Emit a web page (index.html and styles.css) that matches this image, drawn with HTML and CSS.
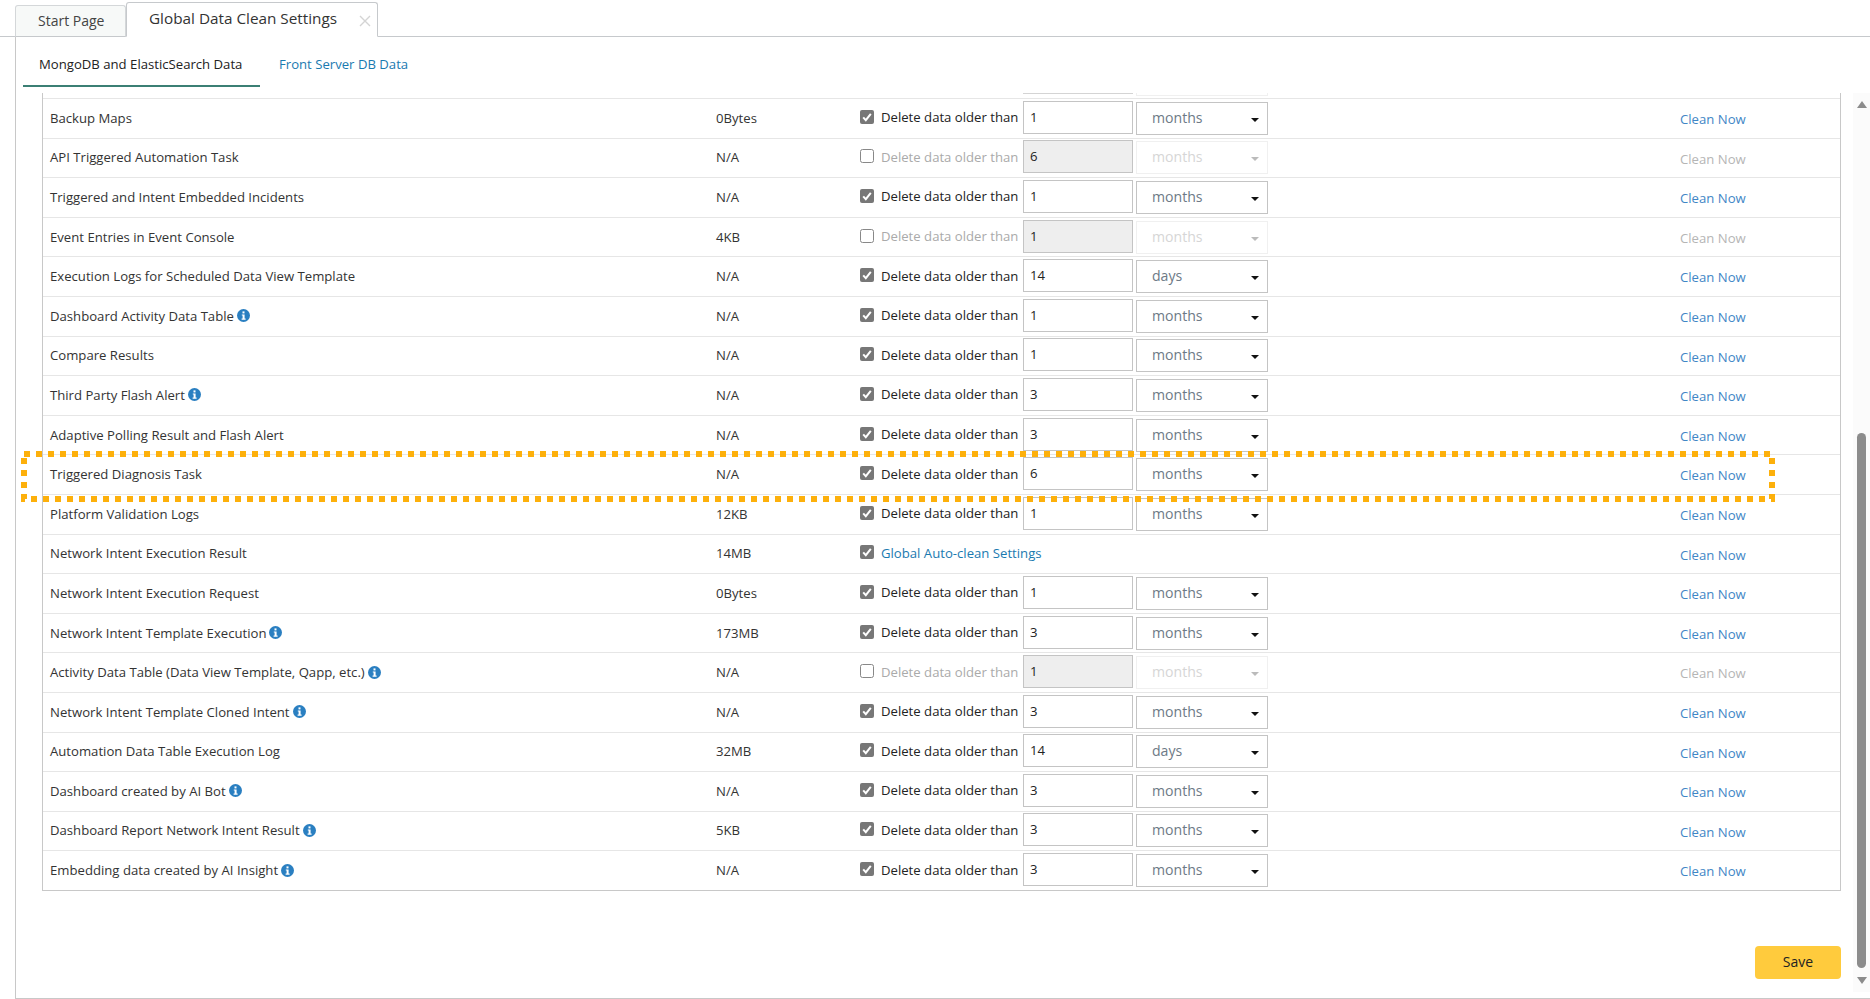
FILE: index.html
```html
<!DOCTYPE html>
<html lang="en">
<head>
<meta charset="utf-8">
<title>Global Data Clean Settings</title>
<link rel="stylesheet" href="styles.css">
</head>
<body>
<svg class="defs" width="0" height="0" aria-hidden="true">
  <symbol id="chk" viewBox="0 0 14 14"><rect width="14" height="14" rx="2" fill="#777"/><path d="M3.2 7.4 5.8 10.2 10.8 3.8" fill="none" stroke="#fff" stroke-width="2"/></symbol>
  <symbol id="unc" viewBox="0 0 14 14"><rect x=".5" y=".5" width="13" height="13" rx="2" fill="#fff" stroke="#888"/></symbol>
  <symbol id="inf" viewBox="0 0 13 13"><circle cx="6.5" cy="6.5" r="6.5" fill="#2a7fc1"/><rect x="5.5" y="2.4" width="2" height="2" fill="#fff"/><path d="M4.8 5.4h2.8v4.2h1v1.1H4.6V9.6h1V6.5h-.8z" fill="#fff"/></symbol>
</svg>
<div class="tabs">
  <div class="tab">Start Page</div>
  <div class="tab active">Global Data Clean Settings<svg class="close" width="12" height="12" viewBox="0 0 12 12"><path d="M1 1 11 11M11 1 1 11" stroke="#d4d4d4" stroke-width="1.4"/></svg></div>
</div>
<div class="content">
  <div class="main">
    <div class="subtabs">
      <div class="subtab on">MongoDB and ElasticSearch Data</div>
      <div class="subtab">Front Server DB Data</div>
    </div>
    <div class="table">
      <div class="peek"><span class="peek-in"></span><span class="peek-sel"></span></div>

      <div class="row"><div class="name">Backup Maps</div><div class="size">0Bytes</div><div class="ctl"><svg class="cb"><use href="#chk"/></svg><span class="lbl">Delete data older than</span><span class="num">1</span><span class="sel">months<i class="caret"></i></span></div><a class="clean">Clean Now</a></div>
      <div class="row off"><div class="name">API Triggered Automation Task</div><div class="size">N/A</div><div class="ctl"><svg class="cb"><use href="#unc"/></svg><span class="lbl">Delete data older than</span><span class="num">6</span><span class="sel">months<i class="caret"></i></span></div><a class="clean">Clean Now</a></div>
      <div class="row"><div class="name">Triggered and Intent Embedded Incidents</div><div class="size">N/A</div><div class="ctl"><svg class="cb"><use href="#chk"/></svg><span class="lbl">Delete data older than</span><span class="num">1</span><span class="sel">months<i class="caret"></i></span></div><a class="clean">Clean Now</a></div>
      <div class="row off"><div class="name">Event Entries in Event Console</div><div class="size">4KB</div><div class="ctl"><svg class="cb"><use href="#unc"/></svg><span class="lbl">Delete data older than</span><span class="num">1</span><span class="sel">months<i class="caret"></i></span></div><a class="clean">Clean Now</a></div>
      <div class="row"><div class="name">Execution Logs for Scheduled Data View Template</div><div class="size">N/A</div><div class="ctl"><svg class="cb"><use href="#chk"/></svg><span class="lbl">Delete data older than</span><span class="num">14</span><span class="sel">days<i class="caret"></i></span></div><a class="clean">Clean Now</a></div>
      <div class="row"><div class="name">Dashboard Activity Data Table<svg class="info"><use href="#inf"/></svg></div><div class="size">N/A</div><div class="ctl"><svg class="cb"><use href="#chk"/></svg><span class="lbl">Delete data older than</span><span class="num">1</span><span class="sel">months<i class="caret"></i></span></div><a class="clean">Clean Now</a></div>
      <div class="row"><div class="name">Compare Results</div><div class="size">N/A</div><div class="ctl"><svg class="cb"><use href="#chk"/></svg><span class="lbl">Delete data older than</span><span class="num">1</span><span class="sel">months<i class="caret"></i></span></div><a class="clean">Clean Now</a></div>
      <div class="row"><div class="name">Third Party Flash Alert<svg class="info"><use href="#inf"/></svg></div><div class="size">N/A</div><div class="ctl"><svg class="cb"><use href="#chk"/></svg><span class="lbl">Delete data older than</span><span class="num">3</span><span class="sel">months<i class="caret"></i></span></div><a class="clean">Clean Now</a></div>
      <div class="row"><div class="name">Adaptive Polling Result and Flash Alert</div><div class="size">N/A</div><div class="ctl"><svg class="cb"><use href="#chk"/></svg><span class="lbl">Delete data older than</span><span class="num">3</span><span class="sel">months<i class="caret"></i></span></div><a class="clean">Clean Now</a></div>
      <div class="row"><div class="name">Triggered Diagnosis Task</div><div class="size">N/A</div><div class="ctl"><svg class="cb"><use href="#chk"/></svg><span class="lbl">Delete data older than</span><span class="num">6</span><span class="sel">months<i class="caret"></i></span></div><a class="clean">Clean Now</a></div>
      <div class="row"><div class="name">Platform Validation Logs</div><div class="size">12KB</div><div class="ctl"><svg class="cb"><use href="#chk"/></svg><span class="lbl">Delete data older than</span><span class="num">1</span><span class="sel">months<i class="caret"></i></span></div><a class="clean">Clean Now</a></div>
      <div class="row"><div class="name">Network Intent Execution Result</div><div class="size">14MB</div><div class="ctl"><svg class="cb"><use href="#chk"/></svg><a class="auto">Global Auto-clean Settings</a></div><a class="clean">Clean Now</a></div>
      <div class="row"><div class="name">Network Intent Execution Request</div><div class="size">0Bytes</div><div class="ctl"><svg class="cb"><use href="#chk"/></svg><span class="lbl">Delete data older than</span><span class="num">1</span><span class="sel">months<i class="caret"></i></span></div><a class="clean">Clean Now</a></div>
      <div class="row"><div class="name">Network Intent Template Execution<svg class="info"><use href="#inf"/></svg></div><div class="size">173MB</div><div class="ctl"><svg class="cb"><use href="#chk"/></svg><span class="lbl">Delete data older than</span><span class="num">3</span><span class="sel">months<i class="caret"></i></span></div><a class="clean">Clean Now</a></div>
      <div class="row off"><div class="name">Activity Data Table (Data View Template, Qapp, etc.)<svg class="info"><use href="#inf"/></svg></div><div class="size">N/A</div><div class="ctl"><svg class="cb"><use href="#unc"/></svg><span class="lbl">Delete data older than</span><span class="num">1</span><span class="sel">months<i class="caret"></i></span></div><a class="clean">Clean Now</a></div>
      <div class="row"><div class="name">Network Intent Template Cloned Intent<svg class="info"><use href="#inf"/></svg></div><div class="size">N/A</div><div class="ctl"><svg class="cb"><use href="#chk"/></svg><span class="lbl">Delete data older than</span><span class="num">3</span><span class="sel">months<i class="caret"></i></span></div><a class="clean">Clean Now</a></div>
      <div class="row"><div class="name">Automation Data Table Execution Log</div><div class="size">32MB</div><div class="ctl"><svg class="cb"><use href="#chk"/></svg><span class="lbl">Delete data older than</span><span class="num">14</span><span class="sel">days<i class="caret"></i></span></div><a class="clean">Clean Now</a></div>
      <div class="row"><div class="name">Dashboard created by AI Bot<svg class="info"><use href="#inf"/></svg></div><div class="size">N/A</div><div class="ctl"><svg class="cb"><use href="#chk"/></svg><span class="lbl">Delete data older than</span><span class="num">3</span><span class="sel">months<i class="caret"></i></span></div><a class="clean">Clean Now</a></div>
      <div class="row"><div class="name">Dashboard Report Network Intent Result<svg class="info"><use href="#inf"/></svg></div><div class="size">5KB</div><div class="ctl"><svg class="cb"><use href="#chk"/></svg><span class="lbl">Delete data older than</span><span class="num">3</span><span class="sel">months<i class="caret"></i></span></div><a class="clean">Clean Now</a></div>
      <div class="row"><div class="name">Embedding data created by AI Insight<svg class="info"><use href="#inf"/></svg></div><div class="size">N/A</div><div class="ctl"><svg class="cb"><use href="#chk"/></svg><span class="lbl">Delete data older than</span><span class="num">3</span><span class="sel">months<i class="caret"></i></span></div><a class="clean">Clean Now</a></div>
    </div>
    <div class="foot"><button class="save">Save</button></div>
  </div>
  <div class="scrollbar">
    <svg class="arrow" width="10" height="7" viewBox="0 0 10 7"><path d="M5 0 10 7H0z" fill="#8c8c8c"/></svg>
    <div class="thumb"></div>
    <svg class="arrow" width="10" height="7" viewBox="0 0 10 7"><path d="M5 7 10 0H0z" fill="#8c8c8c"/></svg>
  </div>
</div>
<svg class="mark" width="1870" height="999" aria-hidden="true"><rect x="24" y="454" width="1748" height="45" fill="none" stroke="#fdb00b" stroke-width="6" stroke-dasharray="6 6"/></svg>
</body>
</html>
```
FILE: styles.css
```css
* { box-sizing: border-box; }
html, body { margin: 0; height: 100%; }
body {
  width: 1870px; height: 999px; overflow: hidden; position: relative;
  display: flex; flex-direction: column;
  font-family: "Open Sans", "Noto Sans", sans-serif; font-size: 13.15px; color: #333; background: #fff;
}
.defs { position: absolute; }
.tabs { display: flex; align-items: flex-end; height: 37px; padding-left: 15px; border-bottom: 1px solid #c6c9cc; }
.tab {
  height: 32px; width: 111px; margin-bottom: -1px; padding: 5px 0 0 22px;
  font-size: 14px; color: #444; background: #f7f9f8;
  border: 1px solid #d4d7d9; border-bottom: 1px solid #c6c9cc; border-radius: 3px 3px 0 0;
}
.tab.active {
  height: 35px; width: 252px; padding: 5px 0 0 22px; position: relative;
  font-size: 15.3px; color: #333; background: #fff; border-color: #c6c9cc; border-bottom-color: #fff;
  display: flex; gap: 22px;
}
.close { margin-top: 7px; flex: none; }
.content {
  flex: 1; margin-left: 15px; display: flex; min-height: 0;
  border-left: 1px solid #c8c8c8; border-bottom: 1px solid #c8c8c8;
}
.main { width: 1837px; display: flex; flex-direction: column; padding-right: 12px; }
.subtabs { display: flex; height: 50px; margin-left: 7px; gap: 0; }
.subtab { padding: 18px 16px 0 19px; height: 50px; color: #1a7ab0; }
.subtab.on { width: 237px; padding-left: 16px; color: #222; border-bottom: 2px solid #3b7f74; }
.table { margin: 6px 0 0 26px; border-left: 1px solid #c8c8c8; border-right: 1px solid #c8c8c8; border-bottom: 1px solid #c8c8c8; }
.peek { height: 5px; display: flex; padding-left: 980px; gap: 3px; align-items: flex-start; }
.peek-in { width: 110px; height: 1px; background: #d4d4d4; }
.peek-sel { width: 132px; height: 3px; border: 1px solid #f0f0f0; border-top: 0; }
.row {
  height: 39.6px; display: grid; grid-template-columns: 666px 144px 820px 1fr; align-items: center;
  padding-left: 7px; border-top: 1px solid #e6e6e6;
}
.name { display: flex; align-items: center; gap: 3px; margin-top: -1px; }
.size { margin-top: -1px; }
.info { width: 13px; height: 13px; flex: none; }
.ctl { display: flex; align-items: center; height: 100%; }
.cb { width: 14px; height: 14px; flex: none; margin: -3px 7px 0 0; }
.lbl { width: 142px; flex: none; color: #222; margin-top: -2px; }
.auto { margin-top: -1px; color: #1a7ab0; }
.num {
  width: 110px; height: 33px; flex: none; margin-top: -2px; padding: 6px 0 0 6px; color: #222;
  background: #fff; border: 1px solid #c4c4c4;
}
.sel {
  width: 132px; height: 33px; flex: none; margin-left: 3px; padding: 5px 0 0 15px; position: relative;
  font-size: 14.1px; color: #6d7a86; background: #fff; border: 1px solid #c4c4c4;
}
.caret {
  position: absolute; right: 8px; top: 15px; width: 0; height: 0;
  border: 4px solid transparent; border-top-color: #111; border-bottom: 0;
}
.off .lbl { color: #aaa; }
.off .num { background: #eee; }
.off .sel { color: #d6d6d6; border-color: #f0f0f0; }
.off .caret { border-top-color: #bbb; }
.off .clean { color: #b5b5b5; }
.clean { color: #3f86c6; margin-top: 1.5px; }
.foot { flex: 1; display: flex; justify-content: flex-end; align-items: flex-start; padding-top: 55px; }
.save {
  width: 86px; height: 33px; padding: 0 0 2px; font: inherit; font-size: 14px; color: #222; background: #ffcb3d;
  border: 0; border-radius: 4px;
}
.scrollbar {
  width: 17px; margin-top: 56px; display: flex; flex-direction: column; align-items: center; background: #fbfbfb;
  padding: 8px 0 0; margin-bottom: 6px;
}
.thumb { width: 9px; height: 535px; margin-top: 325px; background: #8c8c8c; border-radius: 5px; }
.scrollbar .arrow:last-child { margin-top: 9px; }
.mark { position: absolute; left: 0; top: 0; pointer-events: none; }
```
